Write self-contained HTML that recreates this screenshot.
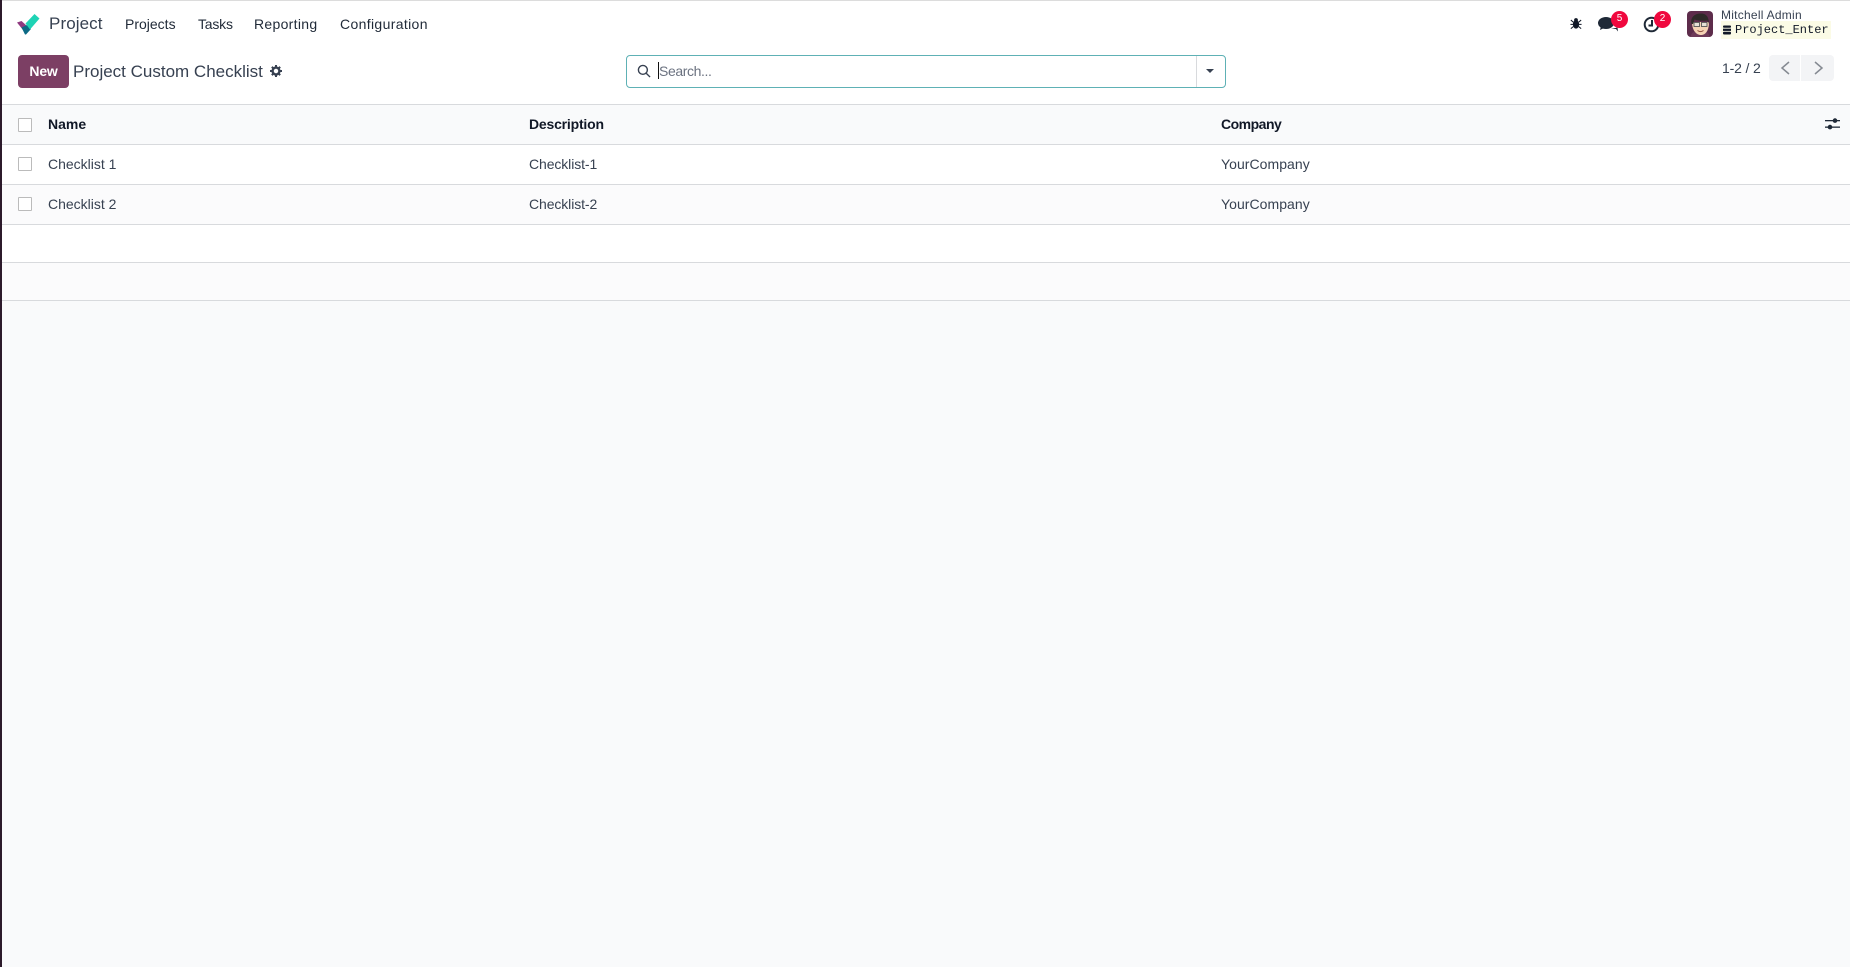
<!DOCTYPE html>
<html><head><meta charset="utf-8"><style>
html,body{margin:0;padding:0;width:1850px;height:967px;overflow:hidden;background:#f9fafb;font-family:"Liberation Sans",sans-serif;color:#374151}
.a{position:absolute;white-space:nowrap}
.t{font-size:14px;line-height:20px}
.cb{position:absolute;left:18px;width:12px;height:12px;border:1px solid #bbb;background:#fff;border-radius:1px}
.line{position:absolute;left:2px;right:0;height:1px;background:#d8dadd}
.badge{position:absolute;width:17px;height:17px;border-radius:9px;background:#f0083e;color:#fff;font-size:10px;line-height:16px;text-align:center}
</style></head><body>
<div class="a" style="left:2px;top:0;width:1848px;height:104px;background:#fff"></div>
<div class="a" style="left:0;top:0;width:1850px;height:1px;background:#dcdcdc"></div>
<div class="a" style="left:0;top:0;width:2px;height:967px;background:#2c1a2b"></div>

<svg class="a" style="left:16px;top:13px" width="24" height="22" viewBox="0 0 24 22"><path d="M1 9.500 L5.500 8 L11 13 L7 17Z" fill="#8f3a80"/><path d="M5.500 14.500 L11 12 L15 16 L10 21.500 L9 21.500Z" fill="#0c6a85"/><path d="M9.500 10.500 L18.500 1 L23.500 5.500 L14 16.500Z" fill="#1ed3b5"/></svg>
<div class="a" style="left:49px;top:13px;font-size:17px;line-height:22px;color:#374151;letter-spacing:.1px">Project</div>
<div class="a t" style="left:125px;top:14px;color:#1f2937">Projects</div>
<div class="a t" style="left:198px;top:14px;color:#1f2937;letter-spacing:-.2px">Tasks</div>
<div class="a t" style="left:254px;top:14px;color:#1f2937;letter-spacing:.3px">Reporting</div>
<div class="a t" style="left:340px;top:14px;color:#1f2937;letter-spacing:.35px">Configuration</div>

<svg class="a" style="left:1570px;top:17px" width="12" height="13" viewBox="0 0 14 14" fill="#111827"><ellipse cx="7" cy="8" rx="3.600" ry="5"/><circle cx="7" cy="3" r="2.200"/><path d="M1 3l3 2.500M13 3l-3 2.500M.5 8h3M13.500 8h-3M1 13l3-2.500M13 13l-3-2.500" stroke="#111827" stroke-width="1.200" fill="none"/></svg>
<svg class="a" style="left:1598px;top:15px" width="22" height="18" viewBox="0 0 22 18" fill="#1f2937"><ellipse cx="8" cy="8" rx="8" ry="6"/><path d="M3 11l-1 4 5-2.500z"/><path d="M13 14h5l2 2.500-.5-4z"/></svg>
<div class="badge" style="left:1611px;top:11px">5</div>
<svg class="a" style="left:1643px;top:16px" width="17" height="17" viewBox="0 0 17 17" fill="none" stroke="#1f2937" stroke-width="2"><circle cx="8.500" cy="8.500" r="6.800"/><path d="M9 4v5.500H5.500"/></svg>
<div class="badge" style="left:1654px;top:11px">2</div>

<svg class="a" style="left:1687px;top:11px" width="26" height="26" viewBox="0 0 26 26"><rect width="26" height="26" rx="4" fill="#5d2c4b"/><path d="M4 24c1-3 4-4 9-4s8 1 9 4v2H4z" fill="#6e3a58"/><path d="M5 11c0 8 4 13 9 13s8-5 8-13z" fill="#f5d3b5"/><path d="M4.500 13C3 6 8 2.500 14 2.500c5 0 8.500 3.500 7.500 10.500L20.500 9.500c-4 .5-9 .5-13-1L6 13z" fill="#2e2a28"/><rect x="7" y="11.500" width="5.500" height="4" fill="#e5e0d6" stroke="#555" stroke-width=".9"/><rect x="14.500" y="11.500" width="5.500" height="4" fill="#e5e0d6" stroke="#555" stroke-width=".9"/><path d="M10.500 19.500c2 1.500 4 1.500 6 0" stroke="#8a4b3a" fill="none"/></svg>
<div class="a" style="left:1721px;top:7px;font-size:12px;line-height:16px;color:#374151;letter-spacing:.25px">Mitchell Admin</div>
<div class="a" style="left:1721px;top:21px;width:110px;height:18px;background:#fbfbe6"></div>
<svg class="a" style="left:1723px;top:25px" width="8" height="10" viewBox="0 0 9 10" fill="#111827"><rect x="0" y="0" width="9" height="2.500" rx="1"/><rect x="0" y="3.500" width="9" height="2.500"/><rect x="0" y="7" width="9" height="3" rx="1"/></svg>
<div class="a" style="left:1735px;top:22px;font-family:'Liberation Mono',monospace;font-size:12px;line-height:16px;color:#111827">Project_Enter</div>

<div class="a" style="left:18px;top:55px;width:51px;height:33px;background:#7c3f64;border-radius:4px;color:#fff;font-size:14px;font-weight:bold;line-height:32px;text-align:center;letter-spacing:-.2px">New</div>
<div class="a" style="left:73px;top:60px;font-size:17px;line-height:23px;color:#374151">Project Custom Checklist</div>
<svg class="a" style="left:270px;top:65px" width="12" height="12" viewBox="0 0 13 13"><circle cx="6.500" cy="6.500" r="3.700" fill="none" stroke="#374151" stroke-width="2.600"/><path d="M6.500 0v3M6.500 10v3M0 6.500h3M10 6.500h3M2 2l2 2M9 9l2 2M11 2L9 4M4 9l-2 2" stroke="#374151" stroke-width="2.200"/></svg>

<div class="a" style="left:626px;top:55px;width:598px;height:31px;border:1px solid #5eb1b5;border-radius:4px;background:#fff"></div>
<div class="a" style="left:1196px;top:56px;width:1px;height:31px;background:#d8dadd"></div>
<svg class="a" style="left:637px;top:64px" width="14" height="14" viewBox="0 0 15 15" fill="none" stroke="#374151" stroke-width="1.500"><circle cx="6.300" cy="6.300" r="4.800"/><path d="M10 10l4 4"/></svg>
<div class="a" style="left:658px;top:62px;width:1px;height:17px;background:#111"></div>
<div class="a t" style="left:659px;top:61px;color:#6b7280;letter-spacing:-.4px">Search...</div>
<div class="a" style="left:1206px;top:69px;border-left:4.500px solid transparent;border-right:4.500px solid transparent;border-top:4.500px solid #374151"></div>

<div class="a t" style="left:1722px;top:58px;color:#374151;letter-spacing:-.15px">1-2 / 2</div>
<div class="a" style="left:1769px;top:55px;width:31px;height:26px;background:#f3f4f6;border-radius:4px 0 0 4px"></div>
<div class="a" style="left:1801px;top:55px;width:33px;height:26px;background:#f3f4f6;border-radius:0 4px 4px 0"></div>
<svg class="a" style="left:1780px;top:60px" width="47" height="16" viewBox="0 0 47 16" fill="none" stroke="#858a92" stroke-width="1.500"><path d="M9 2L2 8l7 6M35 2l7 6-7 6"/></svg>

<div class="line" style="top:104px"></div>
<div class="a" style="left:2px;top:145px;width:1848px;height:39px;background:#fff"></div>
<div class="a" style="left:2px;top:185px;width:1848px;height:39px;background:#fbfbfc"></div>
<div class="a" style="left:2px;top:225px;width:1848px;height:37px;background:#fff"></div>
<div class="a" style="left:2px;top:263px;width:1848px;height:37px;background:#fbfbfc"></div>
<div class="line" style="top:144px"></div>
<div class="line" style="top:184px"></div>
<div class="line" style="top:224px"></div>
<div class="line" style="top:262px"></div>
<div class="line" style="top:300px"></div>

<div class="cb" style="top:118px"></div>
<div class="cb" style="top:157px"></div>
<div class="cb" style="top:197px"></div>
<div class="a t" style="left:48px;top:114px;font-weight:bold;color:#111827">Name</div>
<div class="a t" style="left:529px;top:114px;font-weight:bold;color:#111827;letter-spacing:-.2px">Description</div>
<div class="a t" style="left:1221px;top:114px;font-weight:bold;color:#111827;letter-spacing:-.5px">Company</div>
<div class="a t" style="left:48px;top:154px">Checklist 1</div>
<div class="a t" style="left:529px;top:154px;letter-spacing:-.1px">Checklist-1</div>
<div class="a t" style="left:1221px;top:154px;letter-spacing:.05px">YourCompany</div>
<div class="a t" style="left:48px;top:194px">Checklist 2</div>
<div class="a t" style="left:529px;top:194px;letter-spacing:-.1px">Checklist-2</div>
<div class="a t" style="left:1221px;top:194px;letter-spacing:.05px">YourCompany</div>
<svg class="a" style="left:1825px;top:117px" width="15" height="13" viewBox="0 0 15 13" fill="#1f2937"><rect x="0" y="3" width="15" height="1.300"/><rect x="0" y="9.500" width="15" height="1.300"/><circle cx="10" cy="3.600" r="2.300"/><circle cx="5" cy="10.100" r="2.300"/></svg>
</body></html>
